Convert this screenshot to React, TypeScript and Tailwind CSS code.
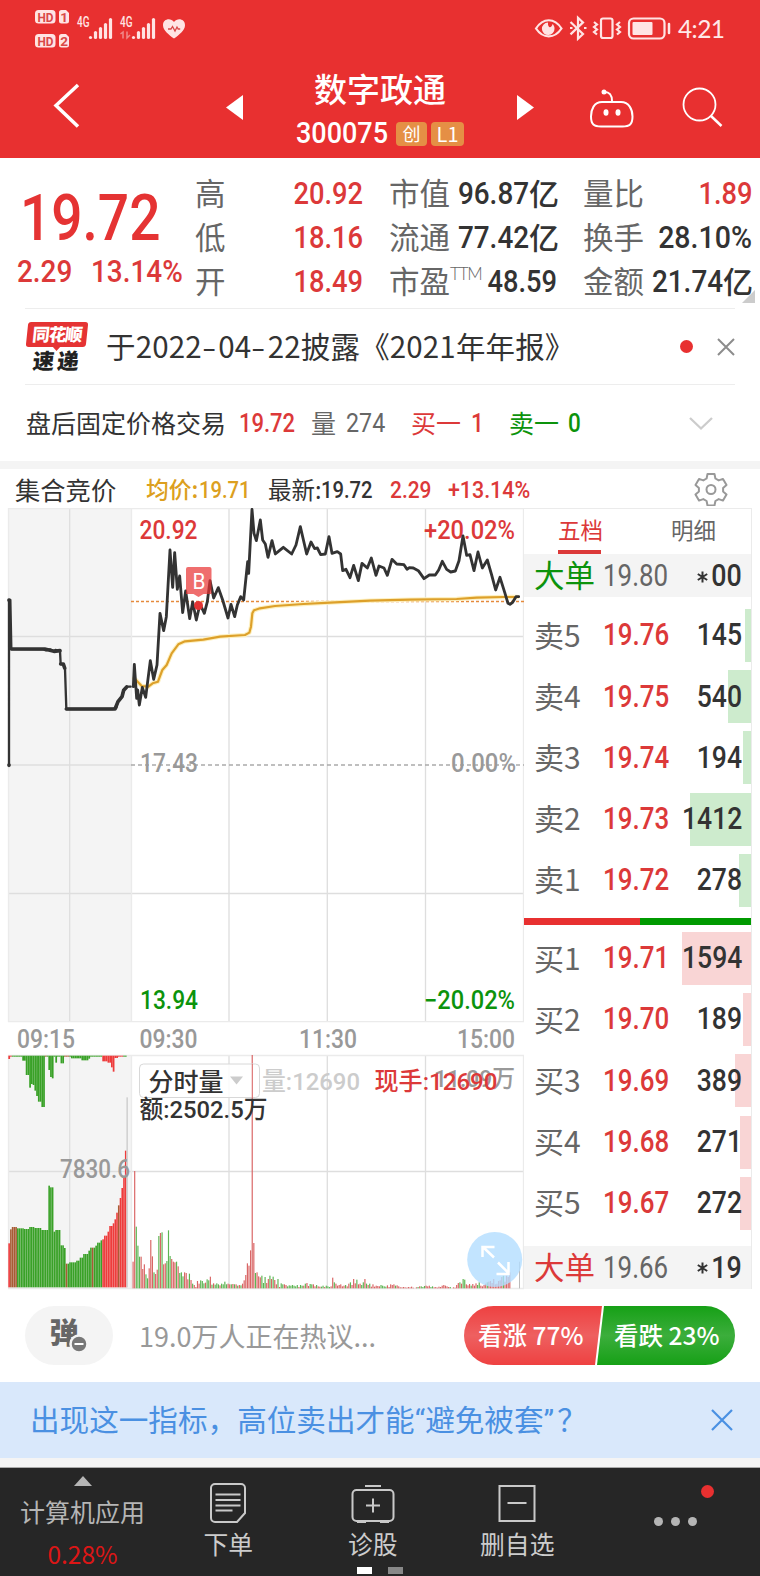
import { ReactNode } from 'react';
import clsx from 'clsx';

type Point = [number, number];

const HIGH_LOW = [
  { label: '高', value: '20.92' },
  { label: '低', value: '18.16' },
  { label: '开', value: '18.49' },
];

const ASKS = [
  { label: '卖5', price: '19.76', volume: '145', bar: 'w-[6px]' },
  { label: '卖4', price: '19.75', volume: '540', bar: 'w-[23px]' },
  { label: '卖3', price: '19.74', volume: '194', bar: 'w-[8px]' },
  { label: '卖2', price: '19.73', volume: '1412', bar: 'w-[61px]' },
  { label: '卖1', price: '19.72', volume: '278', bar: 'w-[12px]' },
];

const BIDS = [
  { label: '买1', price: '19.71', volume: '1594', bar: 'w-[69px]' },
  { label: '买2', price: '19.70', volume: '189', bar: 'w-[8px]' },
  { label: '买3', price: '19.69', volume: '389', bar: 'w-[16px]' },
  { label: '买4', price: '19.68', volume: '271', bar: 'w-[11px]' },
  { label: '买5', price: '19.67', volume: '272', bar: 'w-[11px]' },
];

// chart series are stored on a grid three times finer than the pixels
const AUCTION: Point[] = [
  [27, 885], [27, 390], [31, 390], [34, 537], [130, 538], [138, 541], [150, 538], [162, 544], [166, 540], [180, 543],
  [182, 582], [190, 583], [195, 596], [199, 717], [340, 717], [349, 713], [353, 695], [366, 680], [370, 662], [380, 650], [392, 650],
];

const PRICE: Point[] = [
  [400, 650], [403, 583], [410, 685], [413, 660], [418, 705], [427, 652], [437, 682], [451, 572], [461, 628], [471, 585],
  [480, 430], [491, 482], [499, 440], [510, 240], [518, 352], [524, 248], [532, 358], [539, 318], [548, 428], [557, 363],
  [569, 446], [578, 396], [589, 450], [600, 402], [613, 430], [622, 395], [630, 332], [641, 384], [655, 353], [668, 390],
  [684, 444], [693, 403], [704, 440], [712, 405], [722, 380], [731, 390], [743, 275], [746, 310], [756, 118], [762, 190],
  [769, 212], [781, 150], [788, 210], [796, 222], [804, 262], [816, 212], [826, 252], [838, 242], [850, 232], [875, 252],
  [888, 225], [901, 170], [920, 252], [933, 216], [944, 236], [952, 234], [962, 254], [976, 252], [987, 200], [996, 250],
  [1012, 245], [1022, 252], [1028, 302], [1038, 298], [1050, 323], [1061, 286], [1075, 332], [1086, 280], [1102, 294],
  [1114, 264], [1128, 316], [1137, 288], [1152, 294], [1162, 316], [1176, 268], [1190, 282], [1212, 284], [1221, 298],
  [1228, 293], [1240, 294], [1255, 302], [1272, 326], [1288, 315], [1306, 315], [1316, 300], [1327, 274], [1340, 298],
  [1352, 306], [1366, 303], [1377, 272], [1389, 198], [1400, 256], [1410, 254], [1422, 302], [1434, 246], [1447, 294],
  [1462, 270], [1475, 315], [1487, 360], [1500, 322], [1515, 370], [1524, 400], [1530, 403], [1538, 397], [1548, 380], [1556, 380],
];

const AVERAGE: Point[] = [
  [402, 625], [408, 630], [425, 648], [445, 650], [458, 640], [474, 635], [487, 600], [500, 585], [515, 550], [535, 523], [555, 514],
  [610, 509], [660, 500], [735, 495], [748, 488], [753, 470], [757, 430], [762, 421], [780, 415], [825, 408], [910, 402],
  [990, 398], [1110, 392], [1230, 389], [1370, 387], [1430, 383], [1510, 381], [1552, 381],
];

// [x from, y of the bar's end] steps of the auction volume
const AUCTION_STEPS: Point[] = [
  [25, 790], [31, 748], [36, 741], [47, 745], [68, 747], [86, 741], [102, 744], [122, 750], [142, 617], [148, 622], [158, 755],
  [164, 750], [180, 796], [191, 804], [195, 851], [205, 847], [226, 842], [236, 833], [250, 822], [262, 812], [268, 803],
  [282, 797], [290, 788], [298, 781], [305, 778], [310, 767], [320, 755], [326, 738], [335, 730], [343, 718], [348, 698], [353, 676],
  [358, 654], [363, 624], [368, 590], [373, 512],
];

const UNMATCHED_STEPS: Point[] = [
  [25, 237], [31, 230], [67, 242], [73, 257], [78, 285], [84, 323], [90, 312], [95, 315], [100, 332], [107, 348], [114, 365],
  [121, 381], [132, 230], [142, 270], [148, 291], [154, 295], [159, 230], [165, 248], [170, 230], [180, 250], [191, 230],
  [212, 235], [245, 241], [262, 236], [268, 230], [305, 244], [322, 248], [330, 262], [336, 275], [342, 234], [352, 230], [378, 238],
];

const TURNOVER = [
  80, 352, 185, 128, 95, 95, 58, 72, 42, 30, 60, 145, 96, 48, 43, 56, 157, 166, 168, 72, 75, 82, 174, 97, 88, 80, 78, 80,
  66, 46, 48, 36, 48, 46, 27, 44, 25, 14, 10, 4, 22, 14, 24, 22, 15, 17, 27, 24, 35, 11, 15, 11, 15, 12, 9, 14, 12, 20,
  12, 14, 12, 12, 13, 12, 12, 8, 10, 9, 14, 24, 40, 75, 68, 114, 700, 136, 46, 48, 36, 33, 38, 16, 34, 16, 28, 38, 28,
  35, 25, 12, 28, 4, 15, 12, 12, 10, 6, 9, 8, 10, 8, 6, 10, 4, 10, 8, 8, 14, 16, 7, 13, 12, 12, 6, 10, 6, 5, 5, 8, 4, 8,
  6, 4, 6, 32, 18, 14, 8, 10, 12, 6, 8, 10, 6, 14, 18, 10, 28, 15, 26, 12, 14, 10, 18, 28, 14, 10, 14, 5, 12, 5, 8, 7, 6,
  10, 8, 6, 5, 9, 4, 12, 10, 12, 8, 9, 6, 3, 3, 4, 3, 2, 4, 3, 5, 2, 0, 3, 4, 6, 6, 4, 7, 8, 6, 8, 4, 6, 3, 4, 2, 5, 4, 8,
  10, 8, 6, 4, 4, 0, 3, 2, 10, 16, 18, 14, 28, 26, 12, 9, 13, 8, 13, 8, 15, 10, 18, 8, 6, 10, 14, 18, 20, 22, 16, 28, 12,
  14, 22, 24, 34, 38, 20, 38, 34, 48,
];

const toPoints = (series: Point[]) => series.map((p) => p.join(',')).join(' ');

const stepAt = (steps: Point[], x: number) => {
  let y = steps[0][1];
  for (const [from, value] of steps) {
    if (x >= from) y = value;
  }
  return y;
};

const auctionColor = (x: number) => {
  if (x < 30 || x > 357) return '#ee3b3b';
  if (x < 47 || (x > 194 && x < 203) || (x > 275 && x < 281) || (x > 350 && x < 357)) return '#a85b34';
  if (x > 304) return '#ee3b3b';
  return '#39a127';
};

const unmatchedColor = (x: number) => {
  if (x < 35 || (x > 304 && x < 368)) return '#ee3b3b';
  if ((x > 134 && x < 140) || (x > 192 && x < 205)) return '#a85b34';
  return '#39a127';
};

// Tall narrow numerals
function Num({ children, className }: { children: ReactNode; className?: string }) {
  return (
    <span className={clsx('inline-block whitespace-nowrap font-[Roboto,sans-serif] leading-none', className)}>{children}</span>
  );
}

type LabelProps = { x: number; y: number; w: number; size: number; fill: string; children: string; weight?: number };

function ChartLabel({ x, y, w, size, fill, children, weight = 500 }: LabelProps) {
  return (
    <text
      x={x}
      y={y}
      textLength={w}
      lengthAdjust="spacingAndGlyphs"
      fontSize={size}
      fontWeight={weight}
      fill={fill}
      fontFamily="Roboto, 'Noto Sans CJK SC', sans-serif"
    >
      {children}
    </text>
  );
}

function SignalBars({ x }: { x: number }) {
  return (
    <g stroke="#ffe4e4" strokeWidth="3.200" strokeLinecap="round">
      {[0, 5, 9, 13, 18].map((h, i) => (
        <path key={i} d={`M${x + i * 5} 37.5v${-h}`} />
      ))}
    </g>
  );
}

function StatusBar() {
  return (
    <div className="flex h-[57px] justify-between">
      <svg width="200" height="57" fill="#ffe4e4">
        {[10, 34].map((y, i) => (
          <g key={y} fontFamily="Roboto, sans-serif" fontWeight="700" fontSize="13.5">
            <rect x="35" y={y} width="20.5" height="13.5" rx="3.5" />
            <path d={`M61.500 ${y}h4.500l3 3v8a2.500 2.500 0 0 1-2.500 2.500h-5a2.500 2.500 0 0 1-2.500-2.500v-8.500a2.500 2.500 0 0 1 2.500-2.500z`} />
            <text x="37.500" y={y + 11.5} textLength="16" lengthAdjust="spacingAndGlyphs" fill="#d94848">HD</text>
            <text x="60.300" y={y + 11.5} fill="#d94848">{i + 1}</text>
          </g>
        ))}
        <g fontFamily="Roboto, sans-serif" fontWeight="500" fontSize="14">
          <text x="77" y="27" textLength="12.500" lengthAdjust="spacingAndGlyphs">4G</text>
          <text x="120" y="27" textLength="12.500" lengthAdjust="spacingAndGlyphs">4G</text>
        </g>
        <path d="M120.500 34l2.500-2v6.500M127 31.500v6.500l3-3" fill="none" stroke="#f08a8a" strokeWidth="1.500" />
        <SignalBars x={90.5} />
        <SignalBars x={133.5} />
        <path d="M174 38.500c-5-3.700-11-8-11-13.300 0-6.200 7.500-7.800 11-3.200 3.500-4.600 11-3 11 3.200 0 5.300-6 9.600-11 13.300z" />
        <path d="M168 29h3l1.500-2.500 2.500 4.500 2-4 1.200 2h2" fill="none" stroke="#d94848" strokeWidth="1.300" />
      </svg>
      <div className="flex pr-[36px]">
        <svg width="155" height="57" fill="none" stroke="#ffe4e4" strokeWidth="2.200">
          <path d="M13 28.500c7-11 18.500-11 25.500 0-7 10.500-18.500 10.500-25.500 0z" />
          <path d="M25 22.500a6.300 6.300 0 1 0 6.500 6c0-2-.8-3.500-2-4.500-.5 4-5 5-4.500-1.500z" fill="#ffe4e4" stroke="none" />
          <path d="M47.500 22l12.500 12-5 4.700v-21l5 4.700-12.500 12M47 28h2.500M61 28h2.500" />
          <rect x="78" y="18.500" width="11.500" height="19.500" rx="2" />
          <path d="M71 22l3 2.500-3 2.500 3 2.500-3 2.500 3 2.500M97 22l-3 2.500 3 2.500-3 2.500 3 2.500-3 2.500" strokeWidth="2.200" />
          <rect x="106" y="18.500" width="35.500" height="20" rx="4.500" />
          <rect x="109.500" y="22" width="20" height="13" rx="1" fill="#ffe4e4" stroke="none" />
          <path d="M146 24v9" strokeWidth="2.500" strokeLinecap="round" />
        </svg>
        <span className="mt-[16px] w-[46px] font-[Lato,sans-serif] text-[24.500px] leading-[26px] tracking-[-0.600px] text-[#ffe9e9]">4:21</span>
      </div>
    </div>
  );
}

function Header() {
  return (
    <header className="h-[158px] bg-[#e83030]">
      <StatusBar />
      <div className="flex h-[101px] text-white">
        <svg width="296" height="101" fill="none" stroke="#fff">
          <path d="M78 28L56 48.500l22 21" strokeWidth="3.500" />
          <path d="M243 38v25l-17-12.500z" fill="#fff" stroke="none" />
        </svg>
        <div className="flex w-[168px] flex-col items-center pt-[12px]">
          <div className="whitespace-nowrap text-[33px] font-medium leading-[38px]">数字政通</div>
          <div className="mt-[15px] flex h-6 w-full items-center">
            <Num className="w-[92px] origin-left scale-x-[0.915] text-[29.500px] font-medium">300075</Num>
            <span className="ml-[8px] flex h-6 w-8 items-center justify-center rounded-sm bg-[#e58f45] pb-[2px] text-[18px]">创</span>
            <span className="ml-1 flex h-6 w-[34px] items-center justify-center rounded-sm bg-[#e58f45] pb-px text-[20px]">L1</span>
          </div>
        </div>
        <svg width="296" height="101" fill="none" stroke="#fff">
          <path d="M53 38v25l17-12.500z" fill="#fff" stroke="none" />
          <path d="M138 45h19c8 0 11.500 7.500 11.500 14.500 0 8-3 10-10 10h-21.500c-7 0-10-2-10-10 0-7 3-14.500 11-14.500z" strokeWidth="2" />
          <path d="M141 35c4 0 7 3 7 9" strokeWidth="2" />
          <circle cx="140" cy="35" r="2.500" fill="#fff" stroke="none" />
          <ellipse cx="142" cy="55.500" rx="2.500" ry="3.300" fill="#fff" stroke="none" />
          <ellipse cx="154" cy="55.500" rx="2.500" ry="3.300" fill="#fff" stroke="none" />
          <circle cx="235.500" cy="47.500" r="16" strokeWidth="1.800" />
          <path d="M247 59l10.500 10" strokeWidth="2.500" />
        </svg>
      </div>
    </header>
  );
}

function QuoteRow({ label, children }: { label: ReactNode; children: ReactNode }) {
  return (
    <div className="flex h-11 items-center justify-between whitespace-nowrap">
      <span className="relative top-[-1px] text-[30.500px] leading-none text-[#666]">{label}</span>
      {children}
    </div>
  );
}

function Amount({ children }: { children: ReactNode }) {
  return (
    <span className="mr-[2px] flex items-center text-[#333]">
      <Num className="origin-right scale-x-[0.900] text-[31px] font-medium">{children}</Num>
      <span className="relative top-[-1px] text-[30px] font-medium leading-none">亿</span>
    </span>
  );
}

function Quote() {
  const value = 'origin-right scale-x-[0.88] text-[31px] font-medium';
  return (
    <section className="flex h-[150px]">
      <div className="w-[195px] text-[#e53333]">
        <Num className="ml-[20px] mt-[29px] origin-left scale-x-[0.860] text-[64px] font-medium">19.72</Num>
        <div className="mt-[5px] flex text-[#dc3939]">
          <Num className="ml-[17px] w-[74px] origin-left scale-x-[0.900] text-[31px] font-medium">2.29</Num>
          <Num className="origin-left scale-x-[0.900] text-[31px] font-medium">13.14%</Num>
        </div>
      </div>
      <div className="w-[168px] pt-[13px]">
        {HIGH_LOW.map((row) => (
          <QuoteRow key={row.label} label={row.label}>
            <Num className={clsx(value, 'text-[#dc3939]')}>{row.value}</Num>
          </QuoteRow>
        ))}
      </div>
      <div className="ml-[26px] w-[168px] pt-[13px]">
        <QuoteRow label="市值"><Amount>96.87</Amount></QuoteRow>
        <QuoteRow label="流通"><Amount>77.42</Amount></QuoteRow>
        <QuoteRow
          label={
            <span className="flex">
              市盈
              <span className="w-[24px] font-[Lato,sans-serif] text-[17px] font-light leading-[18px] tracking-[-1.200px]">TTM</span>
            </span>
          }
        >
          <Num className={clsx(value, 'text-[#333]')}>48.59</Num>
        </QuoteRow>
      </div>
      <div className="relative ml-[26px] w-[169px] pt-[13px]">
        <QuoteRow label="量比"><Num className={clsx(value, 'text-[#dc3939]')}>1.89</Num></QuoteRow>
        <QuoteRow label="换手">
          <Num className="origin-right scale-x-[0.920] text-[31px] font-medium text-[#333]">28.10%</Num>
        </QuoteRow>
        <QuoteRow label="金额"><Amount>21.74</Amount></QuoteRow>
        <svg className="absolute right-[-3px] top-[132px]" width="13" height="13"><path d="M13 0v13H0z" fill="#ccc" /></svg>
      </div>
    </section>
  );
}

function NewsRow() {
  return (
    <section className="mx-[25px] flex h-[77px] items-center border-y border-[#ededed]">
      <div className="relative w-[64px] pl-[2px]">
        <div className="flex h-[25px] w-[60px] -skew-x-6 items-center justify-center rounded-[3px] bg-[#e53333] pb-px text-[17.500px] font-black tracking-[-1.200px] text-white">
          同花顺
        </div>
        <svg className="absolute left-[27px] top-[24px]" width="9" height="6"><path d="M0 0h9L4.500 5z" fill="#e53333" /></svg>
        <div className="mt-[2px] flex -skew-x-6 justify-between pl-[6px] pr-[10px] text-[21.500px] font-black leading-[22px] text-[#222]">
          <span>速</span>
          <span>递</span>
        </div>
      </div>
      <div className="relative top-[-1px] ml-[17px] flex-1 whitespace-nowrap text-[29.500px] leading-none tracking-[0.150px] text-[#333]">
        于2022<span className="inline-block w-[16.500px] origin-left scale-x-[1.400]">-</span>04
        <span className="inline-block w-[16.500px] origin-left scale-x-[1.400]">-</span>22披露《2021年年报》
      </div>
      <i className="block size-[13px] rounded-full bg-[#e83030]" />
      <svg className="ml-[24px]" width="18" height="18"><path d="M1 1l16 16M17 1L1 17" stroke="#8c8c8c" strokeWidth="2" /></svg>
    </section>
  );
}

function AfterHours() {
  return (
    <section className="flex h-[76px] items-center whitespace-nowrap pl-[26px] pt-px text-[25px] leading-none text-[#333]">
      <span className="relative top-[-1px] w-[213px]">盘后固定价格交易</span>
      <Num className="w-[72px] origin-left scale-x-[0.880] font-medium text-[#dc3939]">19.72</Num>
      <span className="relative top-[-1px] w-[35px] text-[#666]">量</span>
      <Num className="w-[65px] origin-left scale-x-[0.930] text-[#666]">274</Num>
      <span className="relative top-[-1px] w-[60px] text-[#dc3939]">买一</span>
      <Num className="w-[38px] origin-left scale-x-[0.900] font-medium text-[#dc3939]">1</Num>
      <span className="relative top-[-1px] w-[59px] text-[#0c930c]">卖一</span>
      <Num className="w-[120px] origin-left scale-x-[0.900] font-medium text-[#0c930c]">0</Num>
      <svg width="26" height="16" fill="none"><path d="M2 2l11 10.500L24 2" stroke="#ccc" strokeWidth="2.300" /></svg>
    </section>
  );
}

function ChartHeader() {
  return (
    <div className="flex h-[39px] items-center whitespace-nowrap pl-[15px] pt-[2px] text-[23.500px] leading-none text-[#333]">
      <span className="w-[131px] text-[25.300px]">集合竞价</span>
      <span className="flex w-[122px] items-center text-[#dc9f20]">
        <span className="w-[53px] text-[22.800px] font-medium">均价:</span>
        <Num className="relative top-px origin-left scale-x-[0.860] font-medium">19.71</Num>
      </span>
      <span className="flex w-[122px] items-center">
        <span className="w-[53px]">最新:</span>
        <Num className="relative top-px origin-left scale-x-[0.860] font-medium">19.72</Num>
      </span>
      <Num className="relative top-px w-[58px] origin-left scale-x-[0.890] font-medium text-[#dc3939]">2.29</Num>
      <Num className="relative top-px w-[246px] origin-left scale-x-[0.910] font-medium text-[#dc3939]">+13.14%</Num>
      <svg width="34" height="34" viewBox="0 0 34 34" fill="none" stroke="#999" strokeWidth="2" strokeLinejoin="round" className="relative top-[-1px]">
        <path d="M13.500 2h7l.9 4.500 3.300 1.900 4.300-1.500 3.500 6-3.400 3v3.700l3.400 3-3.500 6-4.300-1.500-3.300 1.900-.9 4.500h-7l-.9-4.500-3.300-1.900L5 28.600l-3.500-6 3.400-3v-3.700l-3.400-3 3.500-6 4.300 1.500 3.300-1.900z" />
        <circle cx="17" cy="17.500" r="4.500" />
      </svg>
    </div>
  );
}

function Chart() {
  const auctionBars = Array.from({ length: 68 }, (_, i) => 25 + i * 5.22);
  return (
    <svg width="524" height="782" viewBox="0 508 524 782" className="shrink-0">
      <rect x="8" y="508" width="123.500" height="514" fill="#f4f4f4" />
      <rect x="8" y="1055" width="123.500" height="233" fill="#f4f4f4" />
      <g stroke="#dedede" strokeWidth="1.300" fill="none">
        <path d="M69.700 508v514M229 508v514M327.300 508v514M425.500 508v514" />
        <path d="M69.700 1055v233M229 1055v233M327.300 1055v233M425.500 1055v233" />
        <path d="M8 636.500h516M8 893.500h516M8 765h123M8 1171.500h516" />
        <path d="M8 508.500h516M8 1021.700h516M8 1055.500h516M8 1288.500h516M8.500 508v514M523.500 508v514M8.500 1055v233M523.500 1055v233M131.500 508v514M131.500 1055v233" stroke="#ebebeb" />
      </g>
      <path d="M131 765h393" stroke="#aaa" strokeWidth="1.500" strokeDasharray="4 3" />
      <path d="M131 601.500h393" stroke="#e58a3c" strokeWidth="1.300" strokeDasharray="3 2" />

      <ChartLabel x={139.500} y={539} w={58} size={25} fill="#dc3939">20.92</ChartLabel>
      <ChartLabel x={424} y={539} w={91} size={25} fill="#dc3939">+20.02%</ChartLabel>
      <ChartLabel x={140} y={771.500} w={58} size={25} fill="#999">17.43</ChartLabel>
      <ChartLabel x={451} y={771.500} w={65} size={25} fill="#999">0.00%</ChartLabel>
      <ChartLabel x={140} y={1009} w={58} size={25} fill="#0c930c">13.94</ChartLabel>
      <ChartLabel x={424} y={1009} w={91} size={25} fill="#0c930c">−20.02%</ChartLabel>
      <ChartLabel x={17} y={1048} w={58} size={25} fill="#999">09:15</ChartLabel>
      <ChartLabel x={139.500} y={1048} w={58} size={25} fill="#999">09:30</ChartLabel>
      <ChartLabel x={299} y={1048} w={58} size={25} fill="#999">11:30</ChartLabel>
      <ChartLabel x={457} y={1048} w={58} size={25} fill="#999">15:00</ChartLabel>

      <g transform="translate(0 470) scale(0.33333)" fill="none" strokeLinejoin="round" strokeLinecap="round">
        <polyline points={toPoints(AVERAGE)} stroke="#fdf0c0" strokeWidth="13" />
        <polyline points={toPoints(AVERAGE)} stroke="#dda02a" strokeWidth="6.500" />
        <polyline points={toPoints(AUCTION)} stroke="#333" strokeWidth="7" />
        <path d="M34 537H134L162 544 180 542M182 582H190L194 594M199 717H345L354 695 366 680 371 661 380 651M27 390v1M27 885v1" stroke="#333" strokeWidth="11" />
        <polyline points={toPoints(PRICE)} stroke="#333" strokeWidth="8.500" />
      </g>

      <circle cx="198.500" cy="605.500" r="4.500" fill="#e33434" />
      <path d="M188 567h21.500a2 2 0 0 1 2 2v25h-8l-5 3-5-3h-7.500v-25a2 2 0 0 1 2-2z" fill="#e83030" fillOpacity="0.700" />
      <ChartLabel x={192.500} y={588.500} w={13} size={22} fill="#fff" weight={400}>B</ChartLabel>

      <g transform="translate(0 980) scale(0.33333)">
        {auctionBars.map((x) => {
          const top = stepAt(AUCTION_STEPS, x + 1);
          const end = stepAt(UNMATCHED_STEPS, x + 1);
          return (
            <g key={x}>
              <rect x={x} y={top} width="4.800" height={922 - top} fill={auctionColor(x + 1)} />
              <rect x={x} y={227} width="5.220" height={end - 227} fill={unmatchedColor(x + 1)} />
            </g>
          );
        })}
        <rect x="379" y="352" width="5" height="570" fill="#d2d2d2" />
        {TURNOVER.map((h, i) => (
          <rect
            key={i}
            x={397.500 + i * 4.830}
            y={925 - h}
            width="3.500"
            height={h}
            fill={h > 300 || (i * 7 + h) % 5 < 3 ? '#d96464' : '#5cb552'}
          />
        ))}
        <rect x="1557" y="845" width="3" height="80" fill="#bbb" />
      </g>

      <ChartLabel x={60} y={1177.500} w={70} size={25} fill="#999">7830.6</ChartLabel>
      <rect x="139.500" y="1064" width="120" height="33.500" rx="4" fill="#fff" fillOpacity="0.850" stroke="#d8d8d8" />
      <path d="M252.300 1064v34" stroke="#d96464" />
      <ChartLabel x={148.500} y={1091} w={75} size={25} fill="#333">分时量</ChartLabel>
      <path d="M230 1076.500h13l-6.500 8z" fill="#ccc" />
      <ChartLabel x={262} y={1090} w={98} size={24.500} fill="#ccc">量:12690</ChartLabel>
      <ChartLabel x={434} y={1087} w={81} size={24} fill="#999">11.09万</ChartLabel>
      <ChartLabel x={374.500} y={1090} w={123} size={24.500} fill="#dc3939">现手:12690</ChartLabel>
      <ChartLabel x={139.500} y={1118} w={128} size={24.500} fill="#333">额:2502.5万</ChartLabel>

      <circle cx="494.700" cy="1259.500" r="27.500" fill="#b3ddff" fillOpacity="0.800" />
      <path d="M494 1257.500l-11-10.500M482.500 1257v-10h12M498 1262.500l10.500 10.500M508.500 1262v12h-12" stroke="#fff" strokeWidth="2.500" fill="none" />
    </svg>
  );
}

type Level = { label: string; price: string; volume: string; bar: string };

function LevelRow({ level, barColor }: { level: Level; barColor: string }) {
  return (
    <div className="relative flex h-[61.200px] items-center whitespace-nowrap pl-[10px]">
      <i className={clsx('absolute right-0 top-[4px] h-[53px]', level.bar, barColor)} />
      <span className="relative top-[-2px] w-[69px] text-[30px] leading-none text-[#666]">{level.label}</span>
      <Num className="relative w-[80px] origin-left scale-x-[0.850] text-[30.500px] font-medium text-[#dc3939]">
        {level.price}
      </Num>
      <Num className="absolute right-[9px] origin-right scale-x-[0.870] text-[30.500px] font-medium text-[#333]">
        {level.volume}
      </Num>
    </div>
  );
}

function BigOrder({ color, price, volume }: { color: string; price: string; volume: string }) {
  return (
    <div className="relative flex h-[43px] items-center whitespace-nowrap bg-[#f4f4f4] pl-[10px]">
      <span className={clsx('relative top-[-1px] w-[69px] text-[30.500px] leading-none', color)}>大单</span>
      <Num className="relative top-px origin-left scale-x-[0.850] text-[30.500px] text-[#666]">{price}</Num>
      <span className="absolute right-[9px] flex items-center pt-[2px] text-[#333]">
        <svg width="11" height="12" className="mr-[-1px]">
          <path d="M5.500 0.500v11M0.800 3l9.400 6M10.200 3l-9.400 6" stroke="#333" strokeWidth="2" />
        </svg>
        <Num className="origin-right scale-x-[0.880] text-[30.500px] font-medium">{volume}</Num>
      </span>
    </div>
  );
}

function OrderBook() {
  return (
    <div className="h-[781px] w-[228px] border-r border-t border-[#ebebeb]">
      <div className="flex h-[45px] text-[22.500px] text-[#666]">
        <div className="ml-[34px] flex w-[45px] flex-col justify-between pt-[3px] text-[#dc3939]">
          <span className="whitespace-nowrap leading-[34px]">五档</span>
          <i className="block h-[4px] w-[43px] bg-[#dc3939]" />
        </div>
        <span className="ml-[68px] whitespace-nowrap pt-[3px] leading-[34px]">明细</span>
      </div>
      <BigOrder color="text-[#0c930c]" price="19.80" volume="00" />
      <div className="mt-[8px]">
        {ASKS.map((level) => <LevelRow key={level.label} level={level} barColor="bg-[#cdebcd]" />)}
      </div>
      <div className="mb-[3px] mt-[7px] flex h-[7px]">
        <i className="w-[116px] bg-[#e83030]" />
        <i className="flex-1 bg-[#009a00]" />
      </div>
      {BIDS.map((level) => <LevelRow key={level.label} level={level} barColor="bg-[#f9d5d5]" />)}
      <div className="mt-[12px]">
        <BigOrder color="text-[#dc3939]" price="19.66" volume="19" />
      </div>
    </div>
  );
}

function Discussion() {
  return (
    <section className="flex h-[92px] items-center pb-[1px] pl-[25px]">
      <div className="relative flex h-[59px] w-[88px] items-center justify-center rounded-full bg-[#f4f4f4]">
        <span className="relative left-[-5px] top-[-4px] text-[29px] font-black leading-none text-[#666]">弹</span>
        <svg className="absolute left-[44px] top-[28px]" width="20" height="20">
          <circle cx="10" cy="10" r="8.500" fill="#777" stroke="#f4f4f4" strokeWidth="2.500" />
          <path d="M5.500 10h9" stroke="#fff" strokeWidth="2" />
        </svg>
      </div>
      <span className="ml-[26px] w-[325px] whitespace-nowrap text-[27px] leading-none text-[#999]">19.0万人正在热议...</span>
      <div className="flex h-[59px] w-[271px] overflow-hidden rounded-full text-[24.500px] font-medium text-white">
        <div className="flex w-[138px] items-center whitespace-nowrap bg-[linear-gradient(180deg,#ee4141,#ee6060_50%,#ee4141)] pb-px pl-[14px] [clip-path:polygon(0_0,100%_0,131px_100%,0_100%)]">
          看涨 77%
        </div>
        <div className="ml-[-5px] flex flex-1 items-center whitespace-nowrap bg-[linear-gradient(180deg,#16a016,#3cae3c_50%,#16a016)] pb-px pl-[17px] [clip-path:polygon(7px_0,100%_0,100%_100%,0_100%)]">
          看跌 23%
        </div>
      </div>
    </section>
  );
}

function Promo() {
  return (
    <section className="flex h-[76px] items-center bg-[#d9e8fb] pl-[30px] text-[29.600px] leading-none text-[#4a90e2]">
      <span className="w-[681px] whitespace-nowrap">
        出现这一指标，高位卖出才能<span className="font-[Roboto]">“</span>避免被套<span className="font-[Roboto]">”</span>
        <span className="ml-[3px]">？</span>
      </span>
      <svg width="22" height="22"><path d="M1 1l20 20M21 1L1 21" stroke="#4a90e2" strokeWidth="2.200" /></svg>
    </section>
  );
}

function NavItem({ label, children }: { label: string; children: ReactNode }) {
  return (
    <div className="flex w-[144.500px] flex-col items-center pt-[14px]">
      <svg width="44" height="42" fill="none" stroke="#c9c9c9" strokeWidth="2">{children}</svg>
      <span className="mt-[6px] text-[24.800px] leading-[26px] text-[#ccc]">{label}</span>
    </div>
  );
}

function BottomNav() {
  return (
    <nav className="relative flex h-[109px] border-t border-[#aaa] bg-[#262626]">
      <div className="flex w-[156px] flex-col items-center pl-[9px] pt-[8px]">
        <svg width="18" height="10"><path d="M9 0l9 10H0z" fill="#b5b5b5" /></svg>
        <span className="mt-[12px] whitespace-nowrap text-[25px] leading-[26px] text-[#b5b5b5]">计算机应用</span>
        <span className="mt-[17px] text-[24.500px] leading-[26px] text-[#dc1616]">0.28%</span>
      </div>
      <NavItem label="下单">
        <path d="M9 2h26a4 4 0 0 1 4 4v25l-8 9H9a4 4 0 0 1-4-4V6a4 4 0 0 1 4-4z" />
        <path d="M9.500 12.500h25M9.500 18h25M9.500 23.500h25M9.500 28.500h17" />
      </NavItem>
      <NavItem label="诊股">
        <rect x="1.500" y="8" width="41" height="31" rx="4" />
        <path d="M14 4h16M6 40h9M29 40h9M22 16.500v14M15 23.500h14" />
      </NavItem>
      <NavItem label="删自选">
        <path d="M4.500 4h35v35h-35zM12.500 21h19" />
      </NavItem>
      <div className="relative flex flex-1 gap-[8px] pl-[64px] pt-[49px]">
        {[0, 1, 2].map((i) => <i key={i} className="block size-[9px] rounded-full bg-[#b5b5b5]" />)}
        <i className="absolute left-[111px] top-[17px] size-[13px] rounded-full bg-[#e83030]" />
      </div>
      <i className="absolute bottom-[2px] left-[357px] h-[7px] w-[15px] bg-white" />
      <i className="absolute bottom-[2px] left-[388px] h-[7px] w-[15px] bg-[#888]" />
    </nav>
  );
}

export default function App() {
  return (
    <div className="h-[1576px] w-[760px] overflow-hidden bg-white font-['Noto_Sans_CJK_SC',sans-serif]">
      <Header />
      <Quote />
      <NewsRow />
      <AfterHours />
      <div className="h-[8px] bg-[#f4f4f4]" />
      <ChartHeader />
      <div className="flex h-[782px]">
        <Chart />
        <OrderBook />
      </div>
      <Discussion />
      <Promo />
      <div className="h-[9px] bg-[#f4f4f4]" />
      <BottomNav />
    </div>
  );
}
